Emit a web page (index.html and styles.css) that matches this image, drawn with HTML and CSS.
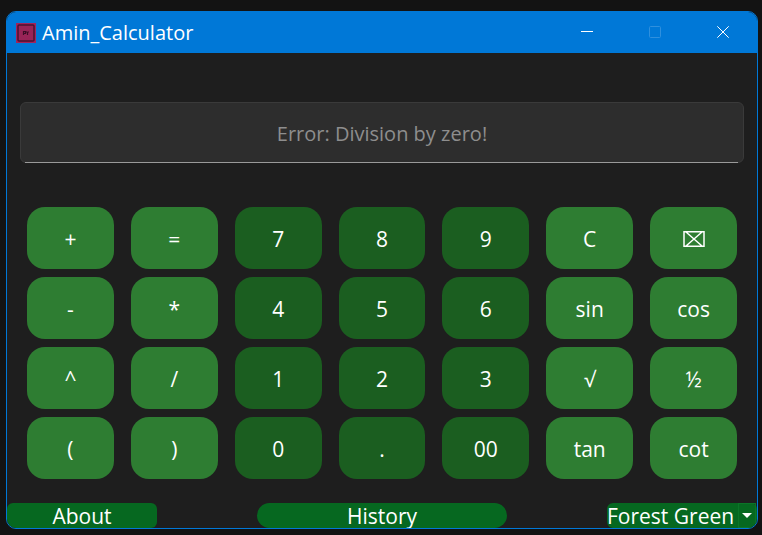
FILE: index.html
```html
<!DOCTYPE html>
<html lang="en">
<head>
<meta charset="utf-8">
<title>Amin_Calculator</title>
<link rel="stylesheet" href="styles.css">
</head>
<body>
<div class="window">
  <header class="titlebar">
    <svg class="app-icon" viewBox="0 0 20 20" aria-hidden="true">
      <rect width="20" height="20" fill="#a3235a"/>
      <rect x="2" y="2" width="16" height="16" rx="1" fill="#982457" stroke="#4b1230" stroke-width="1.5"/>
      <path d="M7.5 12V8.5h2v2h-2M10.5 8.5l1 1.5 1-1.5M11.5 10v2" fill="none" stroke="#3c0d26" stroke-width="1.2"/>
    </svg>
    <h1 class="title">Amin_Calculator</h1>
    <div class="controls">
      <button class="control" type="button" aria-label="Minimize"><svg viewBox="0 0 12 12"><path d="M0 5.5h12"/></svg></button>
      <button class="control" type="button" aria-label="Maximize" disabled><svg viewBox="0 0 12 12"><rect x=".5" y=".5" width="11" height="11" rx="1"/></svg></button>
      <button class="control" type="button" aria-label="Close"><svg viewBox="0 0 12 12"><path d="M.3.3l11.4 11.4M11.7.3L.3 11.7"/></svg></button>
    </div>
  </header>
  <main class="content">
    <div class="display">
      <input class="display-input" type="text" aria-label="Result" placeholder="Error: Division by zero!" readonly>
    </div>
    <div class="keys">
      <button class="key" type="button">+</button>
      <button class="key" type="button">=</button>
      <button class="key digit" type="button">7</button>
      <button class="key digit" type="button">8</button>
      <button class="key digit" type="button">9</button>
      <button class="key" type="button">C</button>
      <button class="key" type="button" aria-label="Delete"><svg class="delete-icon" viewBox="0 0 22 16"><path d="M1 .75h20v14.5H1zM3 1l16 14M19 1L3 15"/></svg></button>
      <button class="key" type="button">-</button>
      <button class="key" type="button">*</button>
      <button class="key digit" type="button">4</button>
      <button class="key digit" type="button">5</button>
      <button class="key digit" type="button">6</button>
      <button class="key" type="button">sin</button>
      <button class="key" type="button">cos</button>
      <button class="key" type="button">^</button>
      <button class="key" type="button">/</button>
      <button class="key digit" type="button">1</button>
      <button class="key digit" type="button">2</button>
      <button class="key digit" type="button">3</button>
      <button class="key" type="button">√</button>
      <button class="key" type="button">½</button>
      <button class="key" type="button">(</button>
      <button class="key" type="button">)</button>
      <button class="key digit" type="button">0</button>
      <button class="key digit" type="button">.</button>
      <button class="key digit" type="button">00</button>
      <button class="key" type="button">tan</button>
      <button class="key" type="button">cot</button>
    </div>
  </main>
  <footer class="footer">
    <button class="action about" type="button">About</button>
    <button class="action history" type="button">History</button>
    <div class="theme">
      <select class="theme-select" aria-label="Theme">
        <option>Forest Green</option>
      </select>
      <span class="theme-arrow"><svg viewBox="0 0 10 5"><path d="M0 0h10L5 5z"/></svg></span>
    </div>
  </footer>
</div>
</body>
</html>
```
FILE: styles.css
```css
* {
  box-sizing: border-box;
}

body {
  margin: 0;
  min-height: 100vh;
  padding: 11px 4px 6px 6px;
  display: flex;
  background: #131313;
  color: #fff;
  font-family: "Segoe UI", "Open Sans", "Noto Sans", sans-serif;
  font-size: 20px;
}

button,
input,
select {
  margin: 0;
  padding: 0;
  border: 0;
  color: inherit;
  font: inherit;
}

.window {
  flex: 1;
  display: flex;
  flex-direction: column;
  overflow: hidden;
  border: 1px solid #0078d7;
  border-radius: 10px;
  background: #1e1e1e;
}

.titlebar {
  display: flex;
  align-items: center;
  height: 41px;
  padding-left: 9px;
  background: #0078d7;
}

.app-icon {
  width: 20px;
  height: 20px;
}

.title {
  flex: 1;
  margin: 0 0 0 6px;
  font-size: 20px;
  font-weight: 400;
  line-height: 28px;
}

.controls {
  display: flex;
  align-self: stretch;
}

.control {
  display: flex;
  align-items: center;
  justify-content: center;
  width: 68px;
  padding-bottom: 1px;
  background: none;
}

.control svg {
  width: 12px;
  height: 12px;
  fill: none;
  stroke: #fff;
}

.control:disabled svg {
  stroke: #2f90de;
}

.content {
  flex: 1;
  padding: 49px 13px 0;
}

.display {
  position: relative;
  height: 61px;
  border: 1px solid #3a3a3a;
  border-radius: 6px;
  background: #2d2d2d;
}

.display::after {
  content: "";
  position: absolute;
  right: 5px;
  bottom: -1px;
  left: 4px;
  height: 1px;
  background: #9a9a9a;
}

.display-input {
  display: block;
  width: 100%;
  height: 100%;
  padding-top: 2px;
  background: none;
  text-align: center;
  outline: 0;
}

.display-input::placeholder {
  color: #8e8e8e;
  opacity: 1;
}

.keys {
  display: grid;
  grid-template-columns: repeat(7, 1fr);
  grid-auto-rows: 62px;
  gap: 8px 17px;
  padding: 44px 7px 0;
}

.key {
  display: flex;
  align-items: center;
  justify-content: center;
  padding-top: 2px;
  border-radius: 18px;
  background: #2e7d32;
  font-size: 21px;
}

.digit {
  background: #1b5e20;
}

.delete-icon {
  width: 22px;
  height: 16px;
  fill: none;
  stroke: #fff;
  stroke-width: 1.5;
}

.footer {
  display: flex;
  justify-content: space-between;
  height: 25px;
  font-size: 21px;
}

.action {
  padding-top: 2px;
  background: #066820;
  line-height: 23px;
}

.about {
  width: 20%;
  border-radius: 6px;
}

.history {
  width: 33.3333%;
  border-radius: 13px;
}

.theme {
  position: relative;
  width: 20%;
}

.theme-select {
  appearance: none;
  display: block;
  width: 100%;
  height: 100%;
  padding-top: 2px;
  border-radius: 6px;
  background: #066820;
  line-height: 23px;
}

.theme-arrow {
  position: absolute;
  inset: 0 1px 0 auto;
  display: flex;
  align-items: center;
  justify-content: center;
  width: 18px;
  border: 1px solid #0b7528;
  pointer-events: none;
}

.theme-arrow svg {
  width: 10px;
  height: 5px;
  fill: #fff;
}
```
